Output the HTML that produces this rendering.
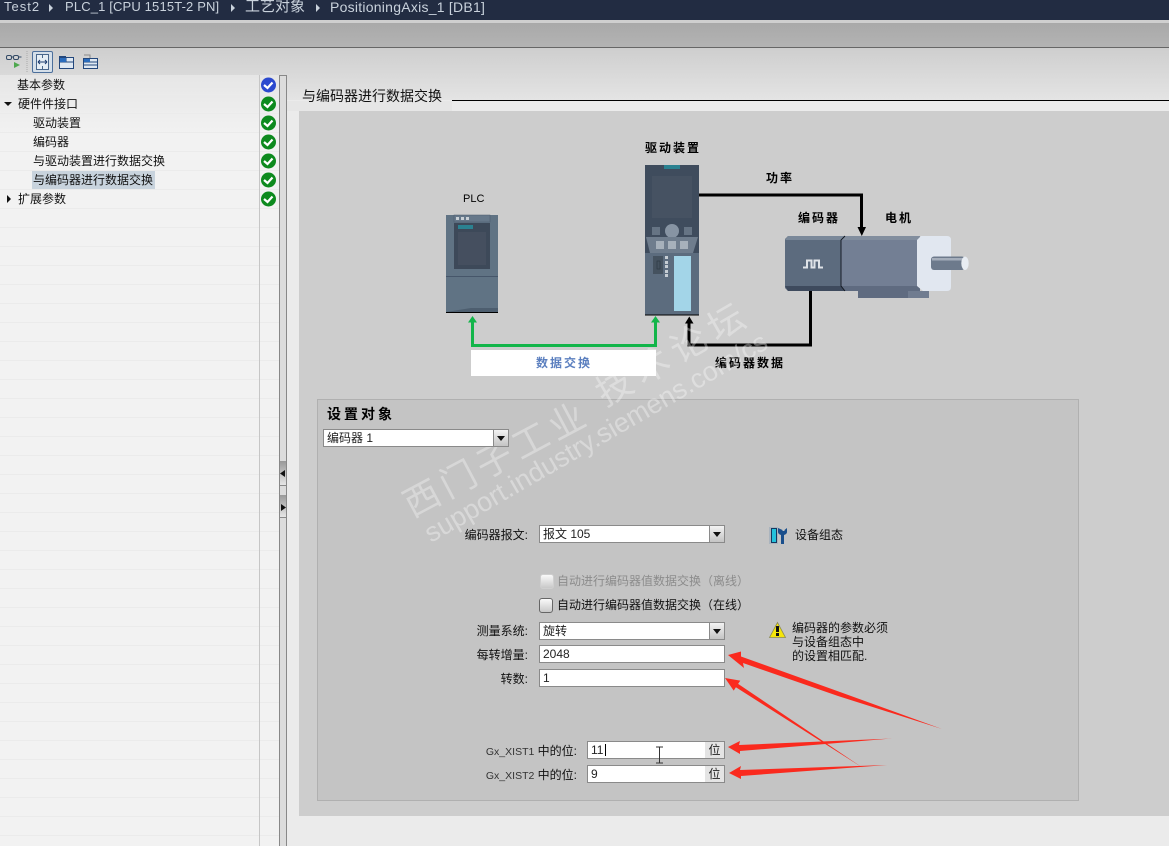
<!DOCTYPE html>
<html><head><meta charset="utf-8">
<style>
html,body{margin:0;padding:0;width:1169px;height:846px;overflow:hidden;background:#ebebeb}
body{position:relative;font-family:"Liberation Sans","WenQuanYi Zen Hei","Noto Sans CJK SC",sans-serif;font-size:12px;color:#111}
.a{position:absolute}
.t{position:absolute;white-space:nowrap;line-height:16px;height:16px}
.r{text-align:right}
.b{font-weight:bold;letter-spacing:2px;color:#000}
.inp{position:absolute;box-sizing:border-box;background:#fff;border:1px solid #8a8a8a;height:18px;line-height:16px;padding-left:3px;white-space:nowrap;color:#222}
.btn{position:absolute;right:0;top:0;width:15px;height:16px;box-sizing:border-box;border-left:1px solid #8a8a8a;background:linear-gradient(#f2f2f2,#c4c4c4)}
.btn:after{content:"";position:absolute;left:3px;top:6px;border:4px solid transparent;border-top:5px solid #111;border-bottom:0}
.suf{position:absolute;right:0;top:0;width:19px;height:16px;background:#e4e4e4;text-align:center}
.chk{position:absolute;box-sizing:border-box;width:14px;height:15px;border-radius:3px;background:linear-gradient(#fafafa,#c8c8c8)}
.ls{font-size:10.500px;color:#333}
svg{position:absolute;left:0;top:0}
</style></head><body>
<div class="a" style="left:0;top:0;width:1169px;height:20px;background:#222c42"></div>
<div class="a" style="left:0;top:20px;width:1169px;height:3px;background:#cfcfcf"></div>
<div class="a" style="left:0;top:23px;width:1169px;height:24px;background:linear-gradient(#a9a9a9,#b3b3b3)"></div>
<div class="a" style="left:0;top:47px;width:1169px;height:1px;background:#666"></div>
<div class="a" style="left:0;top:48px;width:1169px;height:52px;background:linear-gradient(#cecece,#e4e4e4)"></div>
<div class="a" style="left:452px;top:100px;width:717px;height:1px;background:#000"></div>
<div class="a" style="left:287px;top:101px;width:882px;height:745px;background:#ebebeb"></div>
<div class="a" style="left:0;top:101px;width:452px;height:10px;background:#e6e6e6"></div>
<div class="a" style="left:0;top:75px;width:279px;height:771px;background:#f2f2f2"></div>
<div class="a" style="left:0;top:75px;width:279px;height:60px;background:linear-gradient(#e6e6e6,#f2f2f2)"></div>
<div class="a" style="left:0;top:76px;width:279px;height:770px;background:repeating-linear-gradient(to bottom,transparent 0,transparent 18px,#ebebeb 18px,#ebebeb 19px)"></div>
<div class="a" style="left:259px;top:75px;width:1px;height:771px;background:#c6c6c6"></div>
<div class="a" style="left:279px;top:75px;width:8px;height:771px;box-sizing:border-box;background:#dcdcdc;border-left:1px solid #888;border-right:1px solid #888;border-top:1px solid #888"></div>
<div class="a" style="left:280px;top:461px;width:6px;height:24px;background:linear-gradient(#999,#e6e6e6);border-bottom:1px solid #888"></div>
<div class="a" style="left:280px;top:495px;width:6px;height:22px;background:linear-gradient(#999,#e6e6e6);border-bottom:1px solid #888"></div>
<div class="a" style="left:299px;top:111px;width:870px;height:705px;background:#cdcdcd"></div>
<div class="a" style="left:317px;top:399px;width:762px;height:402px;box-sizing:border-box;background:#c4c4c4;border:1px solid #b0b0b0"></div>

<svg width="1169" height="846" viewBox="0 0 1169 846">
<!-- title arrows -->
<g fill="#c9d2dc"><path d="M49 4l4 4-4 4z"/><path d="M231 4l4 4-4 4z"/><path d="M316 4l4 4-4 4z"/></g>

<!-- toolbar -->
<g fill="none">
<g stroke="#334a66"><rect x="6.500" y="55.500" width="5" height="4" rx="1.500"/><rect x="13.500" y="55.500" width="5" height="4" rx="1.500"/><path d="M11.500 57h2M18.500 57h3"/></g>
<path d="M14 62l6 3-6 3z" fill="#4ea84e"/>
<path d="M27 51v22" stroke="#aaa" stroke-dasharray="1 1"/>
<rect x="32.500" y="51.500" width="20" height="21" rx="1.500" fill="#d5dfe9" stroke="#4c6f9b"/>
<rect x="36.500" y="54.500" width="12" height="15" fill="#e6eef5" stroke="#49678c"/>
<path d="M38 62h9M38 62l2-2M38 62l2 2M47 62l-2-2M47 62l-2 2" stroke="#1c3c6e"/>
<path d="M42.500 54v4M42.500 66v4" stroke="#49678c"/>
<rect x="59.500" y="57.500" width="14" height="11" fill="#dfe8f2" stroke="#23477c"/>
<rect x="59" y="56" width="7" height="2" fill="#23477c"/>
<path d="M60 62h14M66 57v5" stroke="#23477c"/>
<rect x="60" y="58" width="6" height="4" fill="#2a6cbd"/>
<rect x="83.500" y="58.500" width="14" height="10" fill="#dfe8f2" stroke="#23477c"/>
<path d="M84 55h6v3" stroke="#8a8a8a"/>
<path d="M84 62h14M84 65h14" stroke="#23477c"/>
<rect x="84" y="59" width="6" height="3" fill="#2a6cbd"/>
</g>

<!-- tree triangles -->
<path d="M4 102h8l-4 4z" fill="#111"/>
<path d="M7 195l4 4-4 4z" fill="#111"/>

<!-- status icons -->
<g>
<circle cx="268.500" cy="85" r="7.500" fill="#2b49cf"/>
<g fill="#0d8a1e"><circle cx="268.500" cy="104" r="7.500"/><circle cx="268.500" cy="123" r="7.500"/><circle cx="268.500" cy="142" r="7.500"/><circle cx="268.500" cy="161" r="7.500"/><circle cx="268.500" cy="180" r="7.500"/><circle cx="268.500" cy="199" r="7.500"/></g>
<g fill="none" stroke="#fff" stroke-width="2.200"><path d="M264 85l3.500 3 5-5.500"/><path d="M264 104l3.500 3 5-5.500"/><path d="M264 123l3.500 3 5-5.500"/><path d="M264 142l3.500 3 5-5.500"/><path d="M264 161l3.500 3 5-5.500"/><path d="M264 180l3.500 3 5-5.500"/><path d="M264 199l3.500 3 5-5.500"/></g>
</g>
<path d="M285 470l-5 3.500 5 3.500z" fill="#111"/><path d="M281 504l5 3.500-5 3.500z" fill="#111"/>

<!-- PLC -->
<rect x="446" y="215" width="52" height="98" fill="#607384"/>
<rect x="454" y="215" width="36" height="7" fill="#66788a" stroke="#4a5a6a" stroke-width=".5"/>
<g fill="#c9d0d6"><rect x="456" y="217" width="3" height="3"/><rect x="461" y="217" width="3" height="3"/><rect x="466" y="217" width="3" height="3"/></g>
<rect x="454" y="223" width="36" height="46" fill="#3d4959"/>
<rect x="458" y="232" width="28" height="33" fill="#454f5f"/>
<rect x="458" y="225" width="15" height="4" fill="#2b8291"/>
<rect x="446" y="276" width="52" height="1" fill="#46566a"/>
<path d="M446 312l25-4h27v4z" fill="#4d5e6f"/>
<rect x="446" y="312" width="52" height="1" fill="#000"/>

<!-- Drive -->
<rect x="645" y="165" width="54" height="150" fill="#3f4c5d"/>
<rect x="652" y="176" width="40" height="42" fill="#465262"/>
<rect x="664" y="165" width="16" height="4" fill="#2b8291"/>
<rect x="652" y="227" width="8" height="8" fill="#667484"/>
<rect x="684" y="227" width="8" height="8" fill="#667484"/>
<circle cx="672" cy="231" r="7" fill="#8794a3"/>
<path d="M646 237h52l-5 16h-43z" fill="#6f7d8d"/>
<g fill="#a7b1bb"><rect x="656" y="241" width="8" height="8"/><rect x="668" y="241" width="8" height="8"/><rect x="680" y="241" width="8" height="8"/></g>
<rect x="645" y="253" width="54" height="62" fill="#5c6c7e"/>
<rect x="674" y="256" width="17" height="55" fill="#a3d5e8"/>
<rect x="653" y="256" width="10" height="18" fill="#45525f"/>
<rect x="657" y="261" width="3" height="8" fill="none" stroke="#2e3944" stroke-width=".7"/>
<g fill="#c6cdd3"><rect x="665" y="256" width="3" height="3"/><rect x="665" y="261" width="3" height="3"/><rect x="665" y="265" width="3" height="3"/><rect x="665" y="270" width="3" height="3"/><rect x="665" y="274" width="3" height="3"/></g>
<rect x="645" y="314.500" width="54" height="1" fill="#000"/>

<!-- Motor -->
<rect x="858" y="291" width="50" height="7" fill="#5f6b80"/>
<rect x="908" y="291" width="21" height="7" fill="#707c90"/>
<path d="M788 236h57l-4 4v46l4 5h-57l-3-3v-49z" fill="#5c6b7e"/>
<path d="M788 236h57l-4 4h-56z" fill="#7a8899"/>
<path d="M785 286h56l4 5h-57z" fill="#3e4a5d"/>
<path d="M845 236h75v55h-75l-4-5v-46z" fill="#737f94"/>
<path d="M845 236h75v4h-79z" fill="#828e9e"/>
<path d="M841 286h79v5h-75z" fill="#5f6b80"/>
<path d="M845 236l-4 4v46l4 5" fill="none" stroke="#10151d" stroke-width=".9"/>
<path d="M921 236h26q4 0 4 4v47q0 4-4 4h-24l-6-5v-46z" fill="#e1e7f0"/>
<rect x="931" y="256.500" width="34" height="13.500" rx="3" fill="#6d7a8c"/>
<rect x="932" y="258" width="32" height="2.500" fill="#a5aebb"/>
<ellipse cx="965" cy="263.300" rx="3.700" ry="6.700" fill="#e8edf3"/>
<path d="M803 267.500h4v-7h4.500v7h3v-7h4.500v7h4" fill="none" stroke="#dfe3e8" stroke-width="2"/>

<!-- wires -->
<path d="M699 195h162.500v33" fill="none" stroke="#000" stroke-width="3"/>
<path d="M857.500 227h8.500l-4.200 9z" fill="#000"/>
<path d="M810.500 291v54h-121.500v-23" fill="none" stroke="#000" stroke-width="3"/>
<path d="M685 323.500h8.500l-4.200-7z" fill="#000"/>
<path d="M472.500 321v24.500h183v-24.500" fill="none" stroke="#12b54a" stroke-width="3"/>
<path d="M468 322.500h9l-4.500-6.500z" fill="#12b54a"/>
<path d="M651 322.500h9l-4.500-6.500z" fill="#12b54a"/>
<rect x="471" y="350" width="185" height="26" fill="#fff"/>

<!-- device config icon -->
<rect x="769" y="527" width="9" height="17" fill="#aab4be"/>
<rect x="771.500" y="528.500" width="5" height="14" fill="#23c2dc" stroke="#16385f"/>
<path d="M778 528v4q0 2 3 3v9h3v-9q3-1 3-3v-4l-2.500 2v1h-2v-1z" fill="#1a4f8c"/>
<!-- warning -->
<path d="M777.500 622.500l8 15h-16z" fill="#f6e60a" stroke="#8b8b55" stroke-width=".8"/>
<rect x="776" y="626" width="3" height="6" fill="#111"/><rect x="776" y="633" width="3" height="3" fill="#111"/>
</svg>

<!-- title text -->
<div class="t" style="left:4px;top:-1px;color:#c9d2dc;font-size:13px;letter-spacing:1px">Test2</div>
<div class="t" style="left:65px;top:-1px;color:#c9d2dc;font-size:13px;letter-spacing:.15px">PLC_1 [CPU 1515T-2 PN]</div>
<div class="t" style="left:245px;top:-1px;color:#c9d2dc;font-size:15px">工艺对象</div>
<div class="t" style="left:330px;top:-1px;color:#c9d2dc;font-size:14px;letter-spacing:.25px">PositioningAxis_1 [DB1]</div>

<!-- tree -->
<div class="a" style="left:32px;top:171px;width:123px;height:18px;background:#c8d3dd"></div>
<div class="t" style="left:17px;top:77px">基本参数</div>
<div class="t" style="left:18px;top:96px">硬件件接口</div>
<div class="t" style="left:33px;top:115px">驱动装置</div>
<div class="t" style="left:33px;top:134px">编码器</div>
<div class="t" style="left:33px;top:153px">与驱动装置进行数据交换</div>
<div class="t" style="left:33px;top:172px">与编码器进行数据交换</div>
<div class="t" style="left:18px;top:191px">扩展参数</div>

<div class="t" style="left:302px;top:88px;font-size:14px">与编码器进行数据交换</div>

<!-- diagram labels -->
<div class="t b" style="left:645px;top:140px">驱动装置</div>
<div class="t" style="left:463px;top:191px;font-size:11px;color:#000">PLC</div>
<div class="t b" style="left:766px;top:170px">功率</div>
<div class="t b" style="left:798px;top:210px">编码器</div>
<div class="t b" style="left:885px;top:210px">电机</div>
<div class="t b" style="left:715px;top:355px">编码器数据</div>
<div class="t b" style="left:536px;top:355px;color:#5b7fbf">数据交换</div>

<!-- settings -->
<div class="t" style="left:327px;top:406px;font-size:14px;font-weight:bold;letter-spacing:3px;color:#000">设置对象</div>

<!-- watermark -->
<svg width="1169" height="846" viewBox="0 0 1169 846">
<g fill="#fff" fill-opacity=".33" font-family="'Noto Sans CJK SC',sans-serif">
<text transform="translate(412,518) rotate(-28)" font-size="36" letter-spacing="5">西门子工业</text>
<text transform="translate(605,407) rotate(-30)" font-size="36" letter-spacing="7">技术论坛</text>
</g>
<text transform="translate(431,543) rotate(-30)" font-size="27" fill="#fff" fill-opacity=".35" font-family="'Liberation Sans',sans-serif">support.industry.siemens.com/cs</text>
</svg>

<div class="inp" style="left:323px;top:429px;width:186px">编码器 1<div class="btn"></div></div>

<div class="t r" style="left:428px;top:527px;width:100px">编码器报文:</div>
<div class="inp" style="left:539px;top:525px;width:186px">报文 105<div class="btn"></div></div>
<div class="t" style="left:795px;top:527px">设备组态</div>

<div class="chk" style="left:540px;top:574px;border:1px solid #cfcfcf"></div>
<div class="t" style="left:557px;top:573px;color:#8c8c8c">自动进行编码器值数据交换（离线）</div>
<div class="chk" style="left:539px;top:598px;border:1px solid #666"></div>
<div class="t" style="left:557px;top:597px">自动进行编码器值数据交换（在线）</div>

<div class="t r" style="left:428px;top:623px;width:100px">测量系统:</div>
<div class="inp" style="left:539px;top:622px;width:186px">旋转<div class="btn"></div></div>
<div class="t r" style="left:428px;top:647px;width:100px">每转增量:</div>
<div class="inp" style="left:539px;top:645px;width:186px">2048</div>
<div class="t r" style="left:428px;top:671px;width:100px">转数:</div>
<div class="inp" style="left:539px;top:669px;width:186px">1</div>

<div class="t" style="left:792px;top:620px">编码器的参数必须</div>
<div class="t" style="left:792px;top:634px">与设备组态中</div>
<div class="t" style="left:792px;top:648px">的设置相匹配.</div>

<div class="t r" style="left:447px;top:743px;width:130px"><span class="ls">Gx_XIST1</span> 中的位:</div>
<div class="inp" style="left:587px;top:741px;width:138px">11<div class="suf">位</div></div>
<div class="t r" style="left:447px;top:767px;width:130px"><span class="ls">Gx_XIST2</span> 中的位:</div>
<div class="inp" style="left:587px;top:765px;width:138px">9<div class="suf">位</div></div>

<svg width="1169" height="846" viewBox="0 0 1169 846">
<path d="M605.500 744v12" stroke="#000" stroke-width="1"/>
<path d="M656 747h7M656 763h7M659.500 747v16" stroke="#333" fill="none"/>
<g fill="#fa2a1e">
<path d="M728 655L741 651.500 741 656.500 840 692 942 729 838 696 743 663 744 668z"/>
<path d="M725 678L740.300 680.600 738.100 683.900 863 768 735.900 687.300 733.700 690.600z"/>
<path d="M728 747L740 741 739 745 892 738.500 740 751 740 754z"/>
<path d="M729 773L741 766 740 770 887 765 741 776 741 779z"/>
</g>
</svg>
</body></html>
